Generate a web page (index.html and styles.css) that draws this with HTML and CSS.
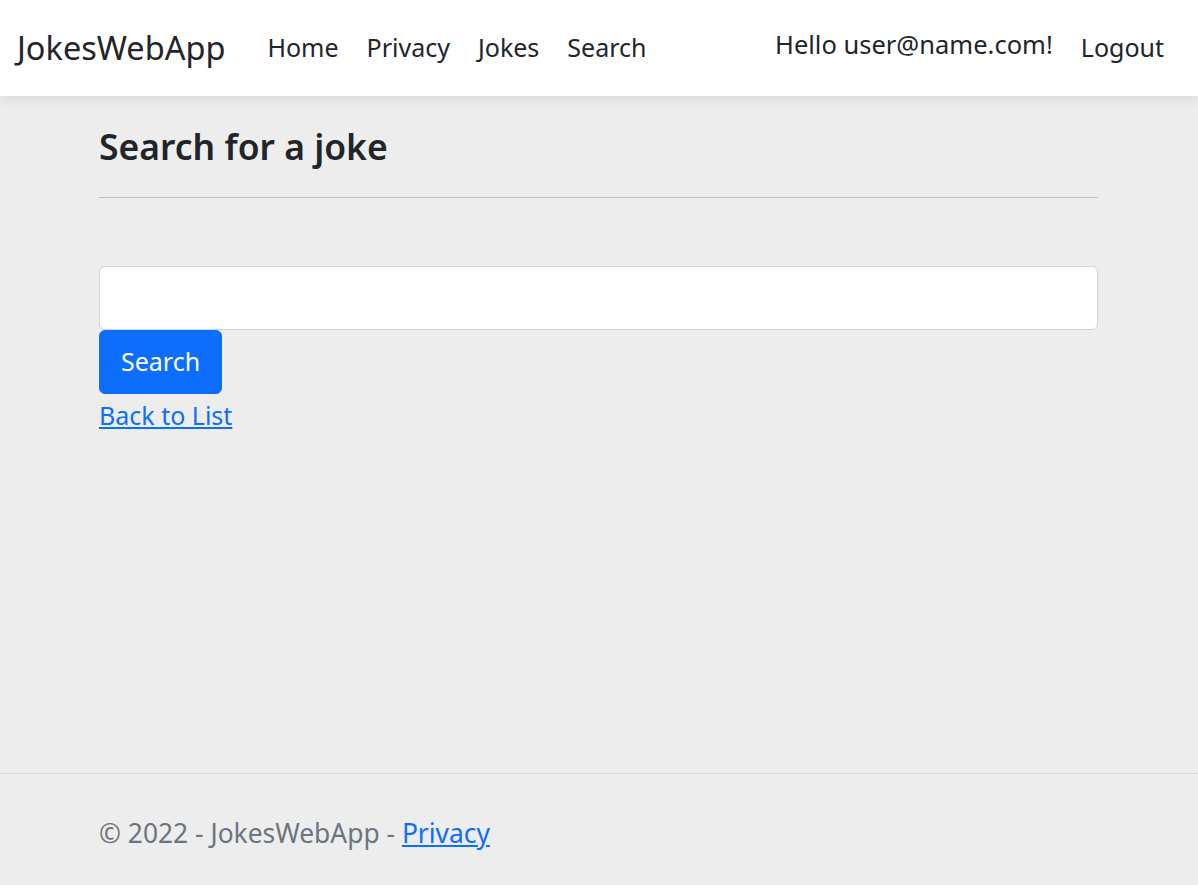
FILE: index.html
```html
<!DOCTYPE html>
<html lang="en">
<head>
<meta charset="utf-8">
<title>Search - JokesWebApp</title>
<link rel="stylesheet" href="styles.css">
</head>
<body>
<div class="page">
  <header class="navbar">
    <a class="brand" href="#">JokesWebApp</a>
    <nav class="nav-main">
      <a class="nav-link" href="#">Home</a>
      <a class="nav-link" href="#">Privacy</a>
      <a class="nav-link" href="#">Jokes</a>
      <a class="nav-link" href="#">Search</a>
    </nav>
    <nav class="nav-user">
      <a class="nav-link hello" href="#">Hello user@name.com!</a>
      <a class="nav-link" href="#">Logout</a>
    </nav>
  </header>
  <main class="container main">
    <h1 class="title">Search for a joke</h1>
    <hr class="divider">
    <form class="search-form">
      <input class="form-control" type="text" name="SearchPhrase">
      <button class="btn-primary" type="submit">Search</button>
    </form>
    <a class="back-link" href="#">Back to List</a>
  </main>
  <footer class="footer">
    <div class="container footer-inner">© 2022 - JokesWebApp - <a href="#">Privacy</a></div>
  </footer>
</div>
</body>
</html>
```
FILE: styles.css
```css
* { box-sizing: border-box; }
html, body { margin: 0; padding: 0; }
body {
  font-family: "Segoe UI", "Noto Sans", "Open Sans", sans-serif;
  font-size: 25px;
  line-height: 1.5;
  color: #212529;
  background: #ededed;
}
a { color: #0d6efd; }
.page {
  min-height: 100vh;
  display: flex;
  flex-direction: column;
}
.navbar {
  height: 96px;
  background: #fff;
  box-shadow: 0 4px 12px rgba(0,0,0,0.08);
  display: flex;
  align-items: center;
  padding: 0 20px 0 17px;
  position: relative;
  z-index: 1;
}
.brand {
  font-size: 32.5px;
  color: #212529;
  text-decoration: none;
  margin-right: 28px;
}
.nav-main { display: flex; flex: 1; }
.nav-user { display: flex; }
.nav-link {
  font-size: 25px;
  color: #212529;
  text-decoration: none;
  padding: 8px 14px;
}
.hello { margin-top: -4px; font-size: 25.5px; }
.container {
  width: 1000px;
  margin: 0 auto;
  padding-right: 1px;
}
.main { flex: 1; padding-top: 29px; }
.title {
  margin: 0;
  font-size: 35.5px;
  font-weight: 600;
  line-height: 1.2;
}
.divider {
  margin: 29px 0 0;
  border: 0;
  border-top: 1px solid #bdbdbd;
}
.search-form {
  margin-top: 68px;
  display: flex;
  flex-direction: column;
  align-items: flex-start;
}
.form-control {
  width: 100%;
  height: 64px;
  border: 1px solid #ced4da;
  border-radius: 6px;
  background: #fff;
  font: inherit;
  padding: 0 18px;
}
.btn-primary {
  height: 64px;
  padding: 0 21px;
  background: #0d6efd;
  color: #fff;
  border: 1px solid #0d6efd;
  border-radius: 6px;
  font: inherit;
}
.back-link {
  display: inline-block;
  margin-top: 3px;
}
.footer {
  border-top: 1px solid #dcdcdc;
  height: 112px;
  color: #6c757d;
  font-size: 26.4px;
  display: flex;
  align-items: center;
}
.footer-inner { padding-top: 8px; }
```
